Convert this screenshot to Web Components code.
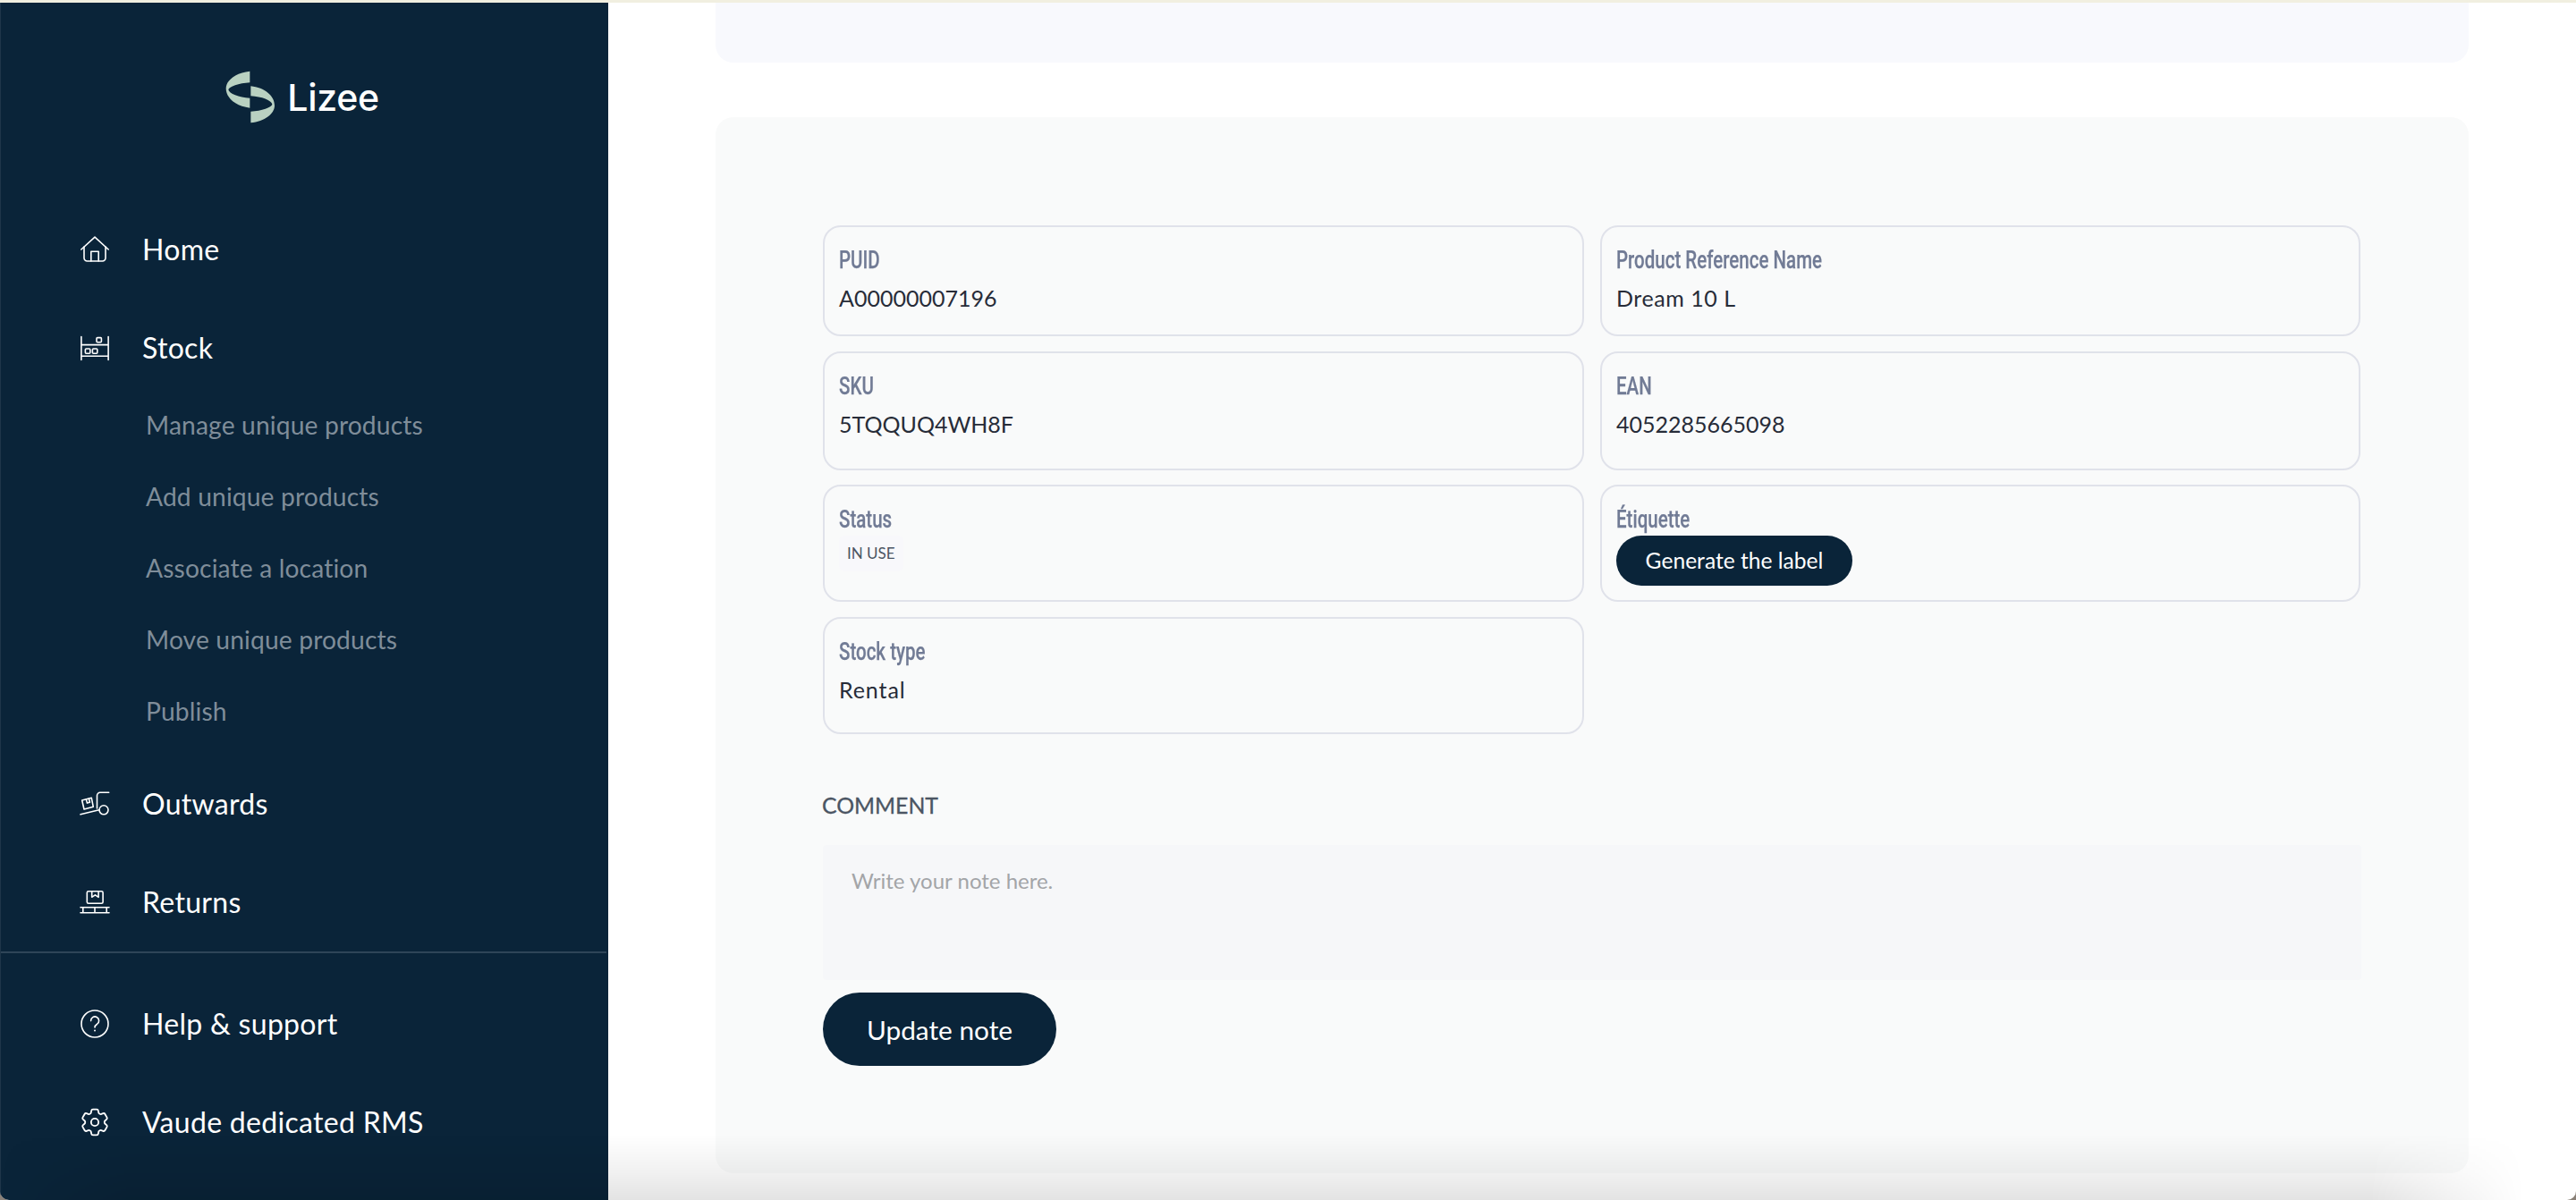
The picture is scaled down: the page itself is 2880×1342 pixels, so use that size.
<!doctype html>
<html lang="en">
<head>
<meta charset="utf-8">
<title>Lizee</title>
<style>
  html, body { margin: 0; height: 100%; background: #8a8178; overflow: hidden; }
  body { font-family: "Lato", "Liberation Sans", sans-serif; }
</style>
</head>
<body>
<lz-app>
  <lz-sidebar>
    <lz-logo></lz-logo>
    <lz-nav-item icon="home">Home</lz-nav-item>
    <lz-nav-item icon="stock">Stock</lz-nav-item>
    <lz-sub-nav>
      <lz-sub-item>Manage unique products</lz-sub-item>
      <lz-sub-item>Add unique products</lz-sub-item>
      <lz-sub-item>Associate a location</lz-sub-item>
      <lz-sub-item>Move unique products</lz-sub-item>
      <lz-sub-item>Publish</lz-sub-item>
    </lz-sub-nav>
    <lz-nav-item icon="outwards">Outwards</lz-nav-item>
    <lz-nav-item icon="returns">Returns</lz-nav-item>
    <lz-nav-item slot="footer" icon="help">Help &amp; support</lz-nav-item>
    <lz-nav-item slot="footer" icon="gear">Vaude dedicated RMS</lz-nav-item>
  </lz-sidebar>

  <lz-banner-panel></lz-banner-panel>

  <lz-detail-panel>
    <lz-field label="PUID">A00000007196</lz-field>
    <lz-field label="Product Reference Name" style="letter-spacing:.55px">Dream 10 L</lz-field>
    <lz-field label="SKU">5TQQUQ4WH8F</lz-field>
    <lz-field label="EAN">4052285665098</lz-field>
    <lz-field label="Status" compact><lz-chip>IN USE</lz-chip></lz-field>
    <lz-field label="Étiquette" compact><lz-button size="small">Generate the label</lz-button></lz-field>
    <lz-field label="Stock type" style="letter-spacing:.9px">Rental</lz-field>

    <lz-comment slot="after" placeholder="Write your note here."></lz-comment>
    <lz-button slot="after" size="large">Update note</lz-button>
  </lz-detail-panel>
</lz-app>

<script>
// each icon sits in a 32x32 box
const ICONS = {
  home: `<path d="M.8 16 16 2.2 31.2 16"/><path d="M4 13v12.5a3.5 3.5 0 0 0 3.5 3.5h17a3.5 3.5 0 0 0 3.5-3.5V13"/><path d="M11.8 29V18.2h8.4V29"/>`,
  stock: `<path d="M.9 3.5v26M31.1 3.5v26M.9 12.6h30.2M.9 25.2h30.2"/><rect x="18" y="4.6" width="5.4" height="5.2" rx="1"/><rect x="5.4" y="17" width="5.4" height="5.2" rx="1"/><rect x="13.4" y="17" width="5.4" height="5.2" rx="1"/>`,
  outwards: `<path d="M31.7 3.3h-9.6a3.4 3.4 0 0 0-3.6 3.4V21"/><circle cx="26" cy="22.8" r="5"/><path d="M0 27.8l20.8-5"/><path d="M1.7 12l10.6-2.7 2 10L4 22z"/><path d="M6.4 10.9l1 4.2 3-.8-1-4.1"/>`,
  returns: `<rect x="7.3" y="3.7" width="17.8" height="13.6" rx="1.6"/><path d="M12.7 3.7v6.6l3.7-2.4 3.7 2.4V3.7"/><path d="M0 21.7h32M0 27.7h32M2.8 21.7v6M16 21.7v6M29.2 21.7v6"/>`,
  help: `<circle cx="16" cy="16" r="15"/><path d="M11.6 12.6a4.5 4.5 0 1 1 7 3.6c-1.6 1-2.6 1.9-2.6 3.8"/><circle cx="16" cy="23.6" r="1" fill="#fff" stroke="none"/>`,
  gear: `<g transform="translate(-3.2 -3.2) scale(1.6)"><path stroke-width="1.15" d="M9.594 3.94c.09-.542.56-.94 1.11-.94h2.593c.55 0 1.02.398 1.11.94l.213 1.281c.063.374.313.686.645.87.074.04.147.083.22.127.325.196.72.257 1.075.124l1.217-.456a1.125 1.125 0 0 1 1.37.49l1.296 2.247a1.125 1.125 0 0 1-.26 1.431l-1.003.827c-.293.241-.438.613-.43.992a7.723 7.723 0 0 1 0 .255c-.008.378.137.75.43.991l1.004.827c.424.35.534.955.26 1.43l-1.298 2.247a1.125 1.125 0 0 1-1.369.491l-1.217-.456c-.355-.133-.75-.072-1.076.124a6.47 6.47 0 0 1-.22.128c-.331.183-.581.495-.644.869l-.213 1.281c-.09.543-.56.94-1.11.94h-2.594c-.55 0-1.019-.398-1.11-.94l-.213-1.281c-.062-.374-.312-.686-.644-.87a6.52 6.52 0 0 1-.22-.127c-.325-.196-.72-.257-1.076-.124l-1.217.456a1.125 1.125 0 0 1-1.369-.49l-1.297-2.247a1.125 1.125 0 0 1 .26-1.431l1.004-.827c.292-.24.437-.613.43-.991a6.932 6.932 0 0 1 0-.255c.007-.38-.138-.751-.43-.992l-1.004-.827a1.125 1.125 0 0 1-.26-1.43l1.297-2.247a1.125 1.125 0 0 1 1.37-.491l1.216.456c.356.133.751.072 1.076-.124.072-.044.146-.086.22-.128.332-.183.582-.495.644-.869l.214-1.28Z"/><circle stroke-width="1.15" cx="12" cy="12" r="2.6"/></g>`,
};

class ShadowElement extends HTMLElement {
  connectedCallback() {
    if (this.shadowRoot) return;
    this.attachShadow({ mode: "open" }).innerHTML = this.render();
  }
}

class LzApp extends ShadowElement {
  render() {
    return `
      <style>
        :host { display: block; height: 1342px; position: relative; overflow: hidden; border-radius: 0 0 10px 10px; background: #fff; }
        .strip { height: 3px; background: #f1efe0; }
        .shell { display: flex; height: 1339px; }
        .main { flex: 1; min-width: 0; padding: 0 120px; }
        .fade {
          position: absolute; left: 0; right: 0; bottom: 0; height: 74px; pointer-events: none;
          background: linear-gradient(to top, rgba(0,0,0,.11), rgba(0,0,0,.055) 42%, rgba(0,0,0,0));
          -webkit-mask-image: linear-gradient(to right, transparent, #000 5%, #000 92%, transparent 98%);
          mask-image: linear-gradient(to right, transparent, #000 5%, #000 92%, transparent 98%);
        }
      </style>
      <div class="strip"></div>
      <div class="shell">
        <slot name="sidebar"></slot>
        <div class="main"><slot></slot></div>
      </div>
      <div class="fade"></div>`;
  }
}

class LzSidebar extends ShadowElement {
  connectedCallback() {
    this.slot = "sidebar";
    super.connectedCallback();
  }
  render() {
    return `
      <style>
        :host { display: flex; flex-direction: column; flex: none; width: 680px; box-sizing: border-box; background: #0a2439; border-left: 1px solid #1f3649; color: #fff; }
        .top { padding-top: 76px; }
        nav { display: flex; flex-direction: column; gap: 50px; margin-top: 111px; }
        hr { margin: 25px 2px 0 0; border: 0; height: 2px; background: #2e4558; }
        .footer { display: flex; flex-direction: column; gap: 50px; margin-top: 49px; }
      </style>
      <div class="top"><slot name="logo"></slot></div>
      <nav><slot></slot></nav>
      <hr>
      <div class="footer"><slot name="footer"></slot></div>`;
  }
}

class LzLogo extends ShadowElement {
  connectedCallback() {
    this.slot = "logo";
    super.connectedCallback();
  }
  render() {
    return `
      <style>
        :host { display: flex; justify-content: center; align-items: center; gap: 13px; height: 59px; padding-right: 5px; }
        svg { width: 56px; height: 59px; flex: none; }
        span { font: 500 41px/59px "Inter", "Liberation Sans", sans-serif; color: #fff; padding-top: 1px; letter-spacing: -.3px; }
      </style>
      <svg viewBox="70 58 168 177" fill="#b9d1c1" aria-hidden="true">
        <path d="M152 60C105 65 72 90 72 118c0 32 33 60 80 65v-33c-37-2-70-15-72-28 2-10 35-22 72-24z"/>
        <path d="M155 233c47-5 80-30 80-58 0-32-33-60-80-65v33c37 2 70 15 72 28-2 10-35 22-72 24z"/>
      </svg>
      <span>Lizee</span>`;
  }
}

class LzNavItem extends ShadowElement {
  render() {
    const name = this.getAttribute("icon") ?? "";
    return `
      <style>
        :host { display: flex; align-items: center; gap: 37px; height: 60px; padding-left: 89px; font-size: 32px; line-height: 60px; letter-spacing: .3px; color: #fff; }
        svg { width: 32px; height: 32px; flex: none; overflow: visible; fill: none; stroke: #fff; stroke-width: 1.6; stroke-linecap: round; stroke-linejoin: round; }
      </style>
      <svg viewBox="0 0 32 32" aria-hidden="true">${ICONS[name] ?? ""}</svg>
      <slot></slot>`;
  }
}

class LzSubNav extends ShadowElement {
  render() {
    return `
      <style>:host { display: block; margin: -33px 0 -17px; }</style>
      <slot></slot>`;
  }
}

class LzSubItem extends ShadowElement {
  render() {
    return `
      <style>:host { display: block; height: 80px; padding-left: 162px; font-size: 28.2px; line-height: 79px; letter-spacing: .15px; color: #7f8d99; }</style>
      <slot></slot>`;
  }
}

class LzBannerPanel extends ShadowElement {
  render() {
    return `
      <style>:host { display: block; height: 67px; background: #f8f9fd; border-radius: 0 0 20px 20px; margin-bottom: 61px; }</style>`;
  }
}

class LzDetailPanel extends ShadowElement {
  render() {
    return `
      <style>
        :host { display: block; box-sizing: border-box; height: 1181px; padding: 121px 120px 0; background: #f9fafa; border-radius: 20px; }
        .grid { display: grid; grid-template-columns: 851px 850px; grid-template-rows: 124px 133px 131px 131px; gap: 16.5px 18px; }
      </style>
      <div class="grid"><slot></slot></div>
      <slot name="after"></slot>`;
  }
}

class LzField extends ShadowElement {
  render() {
    const label = this.getAttribute("label") ?? "";
    const top = this.hasAttribute("compact") ? 3 : 12;
    return `
      <style>
        :host { display: block; box-sizing: border-box; padding: 22px 14px 0 16px; border: 2px solid #e0e2ea; border-radius: 20px; }
        .label { display: block; width: max-content; height: 30px; font: 500 28.5px/30px "Roboto", "Liberation Sans", sans-serif; letter-spacing: 0; color: #717b95; -webkit-text-stroke: .25px #717b95; transform: scaleX(.72); transform-origin: 0 50%; }
        .value { margin-top: ${top}px; font-size: 25px; line-height: 30px; color: #272c38; }
      </style>
      <span class="label">${label}</span>
      <div class="value"><slot></slot></div>`;
  }
}

class LzChip extends ShadowElement {
  render() {
    return `
      <style>:host { display: inline-block; height: 40px; padding: 0 9px; background: #f8f8fb; border-radius: 6px; font-size: 17px; line-height: 40px; color: #4b5563; }</style>
      <slot></slot>`;
  }
}

class LzButton extends ShadowElement {
  render() {
    const large = this.getAttribute("size") === "large";
    return `
      <style>
        :host { display: flex; justify-content: center; align-items: center; width: ${large ? 261 : 264}px; height: ${large ? 82 : 56}px; margin-top: ${large ? 14 : 0}px; background: #0a2439; border-radius: 41px; color: #fff; font-size: ${large ? 29.8 : 24.6}px; }
      </style>
      <slot></slot>`;
  }
}

class LzComment extends ShadowElement {
  render() {
    const placeholder = this.getAttribute("placeholder") ?? "";
    return `
      <style>
        :host { display: block; margin-top: 65.5px; }
        h3 { margin: 0 0 29px -1px; font: 400 24.8px/30px "Lato", "Liberation Sans", sans-serif; color: #4b5563; -webkit-text-stroke: .3px #4b5563; }
        .box { box-sizing: border-box; height: 151px; padding: 25px 32px; background: #f6f7f9; border-radius: 4px; font-size: 24px; line-height: 30px; color: #a3a5a8; }
      </style>
      <h3>COMMENT</h3>
      <div class="box">${placeholder}</div>`;
  }
}

customElements.define("lz-app", LzApp);
customElements.define("lz-sidebar", LzSidebar);
customElements.define("lz-logo", LzLogo);
customElements.define("lz-nav-item", LzNavItem);
customElements.define("lz-sub-nav", LzSubNav);
customElements.define("lz-sub-item", LzSubItem);
customElements.define("lz-banner-panel", LzBannerPanel);
customElements.define("lz-detail-panel", LzDetailPanel);
customElements.define("lz-field", LzField);
customElements.define("lz-chip", LzChip);
customElements.define("lz-button", LzButton);
customElements.define("lz-comment", LzComment);
</script>
</body>
</html>
